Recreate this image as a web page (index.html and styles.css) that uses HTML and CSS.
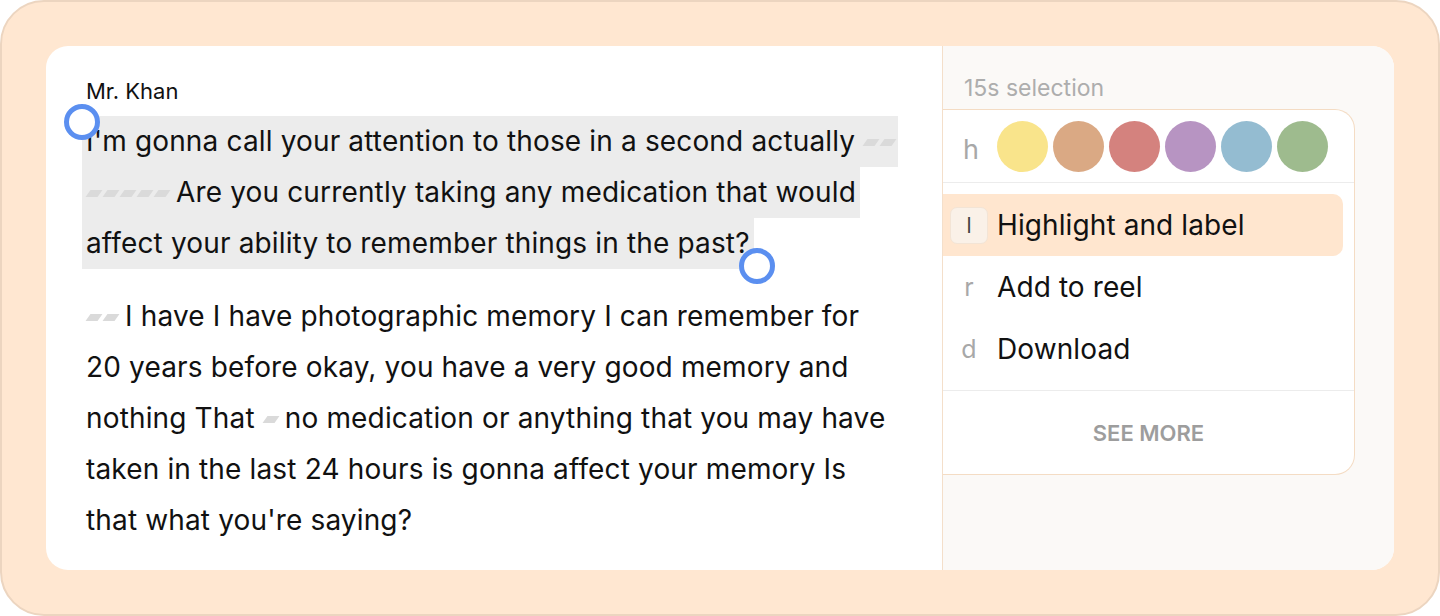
FILE: index.html
```html
<!DOCTYPE html>
<html lang="en">
<head>
<meta charset="utf-8">
<title>Transcript selection</title>
<link rel="stylesheet" href="styles.css">
</head>
<body>
<div class="frame">
  <div class="card">
    <section class="transcript">
      <div class="speaker">Mr. Khan</div>
      <p class="para para-first"><span class="sel"><span class="handle handle-start"></span>I'm gonna call your attention to those in a second actually <span class="pause"><i></i><i></i></span> <span class="pause"><i></i><i></i><i></i><i></i><i></i></span> Are you currently taking any medication that would affect your ability to remember things in the past?<span class="handle handle-end"></span></span></p>
      <p class="para para-second"><span class="pause"><i></i><i></i></span> I have I have photographic memory I can remember for 20 years before okay, you have a very good memory and nothing That <span class="pause"><i></i></span> no medication or anything that you may have taken in the last 24 hours is gonna affect your memory Is that what you're saying?</p>
    </section>
    <aside class="side">
      <div class="sel-label">15s selection</div>
      <div class="menu">
        <div class="colors">
          <span class="key-h">h</span>
          <span class="dot dot-yellow"></span>
          <span class="dot dot-tan"></span>
          <span class="dot dot-red"></span>
          <span class="dot dot-purple"></span>
          <span class="dot dot-blue"></span>
          <span class="dot dot-green"></span>
        </div>
        <ul class="items">
          <li class="item active"><span class="key boxed">l</span><span class="label">Highlight and label</span></li>
          <li class="item"><span class="key">r</span><span class="label">Add to reel</span></li>
          <li class="item"><span class="key">d</span><span class="label">Download</span></li>
        </ul>
        <div class="more">SEE MORE</div>
      </div>
    </aside>
  </div>
</div>
</body>
</html>
```

FILE: styles.css
```css
* { box-sizing: border-box; }
html, body { margin: 0; padding: 0; }
body {
  font-family: Inter, "Noto Sans", "Liberation Sans", sans-serif;
  color: #111;
  background: #fff;
}
.frame {
  width: 1440px;
  height: 616px;
  background: #ffe7d1;
  border: 2px solid #ecd5c0;
  border-radius: 44px;
  padding: 44px;
}
.card {
  display: flex;
  height: 524px;
  background: #fff;
  border-radius: 22px;
  overflow: hidden;
}
.transcript {
  width: 896px;
  flex: none;
  padding: 30px 44px 0 36px;
}
.speaker {
  font-size: 22px;
  line-height: 30px;
  padding-left: 4px;
  margin-bottom: 10px;
}
.para {
  margin: 0;
  font-size: 28px;
  line-height: 51px;
  letter-spacing: 0.15px;
}
.para-second {
  margin-top: 22px;
  padding-left: 4px;
  padding-right: 8px;
}
.sel {
  position: relative;
  background: #ececec;
  padding: 8px 4px 9px 4px;
  -webkit-box-decoration-break: clone;
  box-decoration-break: clone;
}
.handle {
  position: relative;
  display: inline-block;
  width: 0;
  height: 0;
}
.handle::after {
  content: "";
  position: absolute;
  width: 26px;
  height: 26px;
  border-radius: 50%;
  border: 5px solid #5b8ff0;
  background: #fff;
}
.handle-start::after { left: -22px; top: -47px; }
.handle-end::after { left: -11px; top: -5px; }
.pause {
  display: inline-flex;
  gap: 5px;
  vertical-align: middle;
  position: relative;
  top: -1px;
  padding-left: 2px;
}
.pause i {
  display: block;
  width: 12px;
  height: 7px;
  background: #dadada;
  transform: skewX(-35deg);
}
.side {
  flex: 1;
  background: #fbf9f7;
  border-left: 1.5px solid #f4dfca;
  padding: 27px 39px 0 0;
}
.sel-label {
  font-size: 23px;
  line-height: 30px;
  color: #adadad;
  padding-left: 21px;
  margin-bottom: 6px;
}
.menu {
  background: #fff;
  border: 1.5px solid #f4dcc4;
  border-left: none;
  border-radius: 0 20px 20px 0;
}
.colors {
  display: flex;
  align-items: center;
  height: 73px;
  padding-left: 20px;
  gap: 5px;
  border-bottom: 1.5px solid #ececec;
}
.key-h {
  font-size: 27px;
  color: #a8a8a8;
  margin-right: 13px;
  position: relative;
  top: 3px;
}
.dot {
  width: 51px;
  height: 51px;
  border-radius: 50%;
  flex: none;
}
.dot-yellow { background: #f9e48b; }
.dot-tan { background: #daa984; }
.dot-red { background: #d4827e; }
.dot-purple { background: #b794c2; }
.dot-blue { background: #94bcd1; }
.dot-green { background: #9ebb8e; }
.items {
  list-style: none;
  margin: 0;
  padding: 11px 0 10px 0;
  border-bottom: 1.5px solid #ececec;
}
.item {
  display: flex;
  align-items: center;
  height: 62px;
  padding-left: 7px;
  margin-right: 11px;
  font-size: 28px;
  letter-spacing: 0.1px;
}
.item.active {
  background: #ffe6cf;
  border-radius: 0 10px 10px 0;
}
.key {
  width: 38px;
  height: 37px;
  display: flex;
  align-items: center;
  justify-content: center;
  color: #a8a8a8;
  font-size: 25px;
  margin-right: 9px;
}
.key.boxed {
  background: #faf1e8;
  border: 1px solid #f3e4d5;
  border-radius: 7px;
  color: #444;
  font-size: 21px;
}
.more {
  height: 83px;
  display: flex;
  align-items: center;
  justify-content: center;
  font-size: 22px;
  font-weight: 600;
  color: #9d9d9d;
  letter-spacing: 0;
}
```
